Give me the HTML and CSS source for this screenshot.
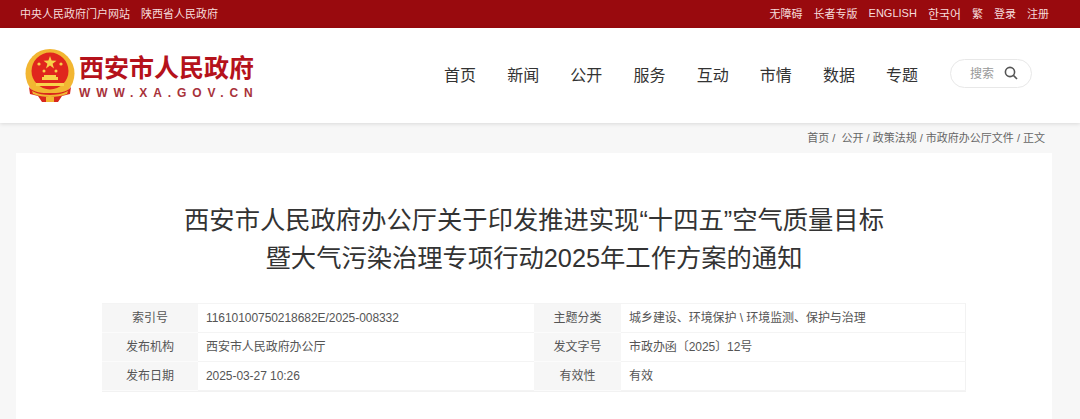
FILE: index.html
```html
<!DOCTYPE html>
<html lang="zh-CN">
<head>
<meta charset="utf-8">
<title>西安市人民政府</title>
<link rel="stylesheet" href="styles.css">
</head>
<body>
<div class="topbar">
  <div class="top-left"><span>中央人民政府门户网站</span><span>陕西省人民政府</span></div>
  <div class="top-right"><span>无障碍</span><span>长者专版</span><span>ENGLISH</span><span class="ko">한국어</span><span>繁</span><span>登录</span><span>注册</span></div>
</div>
<header class="header">
  <div class="logo">
    <svg class="emblem" width="50" height="53" viewBox="0 0 50 53">
      <circle cx="25" cy="24.5" r="24.5" fill="#f2b632"/>
      <circle cx="25" cy="22" r="18.5" fill="#e0261d"/>
      <path d="M25 7l1.6 4.6 4.9.1-3.9 3 1.4 4.7-4-2.8-4 2.8 1.4-4.7-3.9-3 4.9-.1z" fill="#f8d24a"/>
      <circle cx="14" cy="15" r="1.6" fill="#f8d24a"/><circle cx="36" cy="15" r="1.6" fill="#f8d24a"/>
      <circle cx="19" cy="22" r="1.5" fill="#f8d24a"/><circle cx="31" cy="22" r="1.5" fill="#f8d24a"/>
      <path d="M17 31h16v-3h-2v-2H19v2h-2zM11 34h28v3H11z" fill="#f8d24a"/>
      <path d="M4 38c5 6 13 6 21 6s16 0 21-6l-1 7-8 2-4 6H17l-4-6-8-2z" fill="#d8261d"/>
      <path d="M7 42c6 3 12 4 18 4s12-1 18-4l-1 3c-5 2-11 3-17 3S13 47 8 45zM21 46h8v7h-8z" fill="#f2b632"/>
    </svg>
    <div class="logo-text">
      <div class="logo-name">西安市人民政府</div>
      <div class="logo-url">WWW.XA.GOV.CN</div>
    </div>
  </div>
  <nav class="nav"><a>首页</a><a>新闻</a><a>公开</a><a>服务</a><a>互动</a><a>市情</a><a>数据</a><a>专题</a></nav>
  <div class="search">
    <span>搜索</span>
    <svg width="14" height="14" viewBox="0 0 14 14"><circle cx="6" cy="6" r="4.6" fill="none" stroke="#555" stroke-width="1.6"/><path d="M9.4 9.4L13 13" stroke="#555" stroke-width="1.6"/></svg>
  </div>
</header>
<main class="page">
  <div class="crumbs">首页 /&nbsp; 公开 / 政策法规 / 市政府办公厅文件 / 正文</div>
  <article class="card">
    <h1 class="title">西安市人民政府办公厅关于印发推进实现“十四五”空气质量目标<br>暨大气污染治理专项行动2025年工作方案的通知</h1>
    <div class="meta">
      <div class="lbl">索引号</div><div class="val">11610100750218682E/2025-008332</div>
      <div class="lbl">主题分类</div><div class="val">城乡建设、环境保护 \ 环境监测、保护与治理</div>
      <div class="lbl">发布机构</div><div class="val">西安市人民政府办公厅</div>
      <div class="lbl">发文字号</div><div class="val">市政办函〔2025〕12号</div>
      <div class="lbl">发布日期</div><div class="val">2025-03-27 10:26</div>
      <div class="lbl">有效性</div><div class="val">有效</div>
    </div>
  </article>
</main>
</body>
</html>
```
FILE: styles.css
```css
* { box-sizing: border-box; }
html, body { margin: 0; height: 100%; overflow: hidden; }
body {
  background: #f7f7f7;
  font-family: "Liberation Sans", "Noto Sans CJK SC", sans-serif;
  color: #333;
}
.topbar {
  height: 28px;
  background: #990a0e;
  color: #f6dcdc;
  font-size: 11px;
  display: flex;
  justify-content: space-between;
  align-items: center;
  padding: 0 31px 2px 20px;
}
.top-left { display: flex; gap: 11px; }
.top-right { display: flex; gap: 11px; align-items: center; }
.ko { font-size: 12px; }
.header {
  height: 95px;
  background: #fff;
  box-shadow: 0 1px 4px rgba(0,0,0,.12);
  display: flex;
  align-items: center;
  padding: 0 0 0 25px;
  position: relative;
}
.logo { display: flex; flex: none; align-items: center; gap: 4px; width: 419px; }
.emblem { flex: none; }
.logo-text { padding-top: 2px; }
.logo-name {
  font-size: 25px;
  line-height: 32px;
  font-weight: 700;
  color: #b5121b;
}
.logo-url {
  font-size: 12px;
  line-height: 16px;
  margin-top: 1px;
  font-weight: 700;
  letter-spacing: 5.9px;
  color: #a8323a;
  white-space: nowrap;
}
.nav { display: flex; flex: none; gap: 31.15px; margin-bottom: 3px; font-size: 16px; color: #333; white-space: nowrap; }
.search {
  flex: none;
  margin: 0 0 5px 32px;
  width: 82px;
  height: 29px;
  border: 1px solid #e8e8e8;
  border-radius: 15px;
  display: flex;
  align-items: center;
  gap: 10px;
  padding: 0 0 1px 19px;
  font-size: 12px;
  color: #999;
}
.page { padding: 0 28px 0 16px; }
.crumbs {
  height: 30px;
  display: flex;
  align-items: center;
  justify-content: flex-end;
  font-size: 11px;
  color: #666;
  white-space: pre;
  padding: 0 7px 2px 0;
}
.card {
  background: #fff;
  padding: 48px 86px 0;
  height: 266px;
}
.title {
  margin: 0 0 26px;
  font-size: 25.3px;
  line-height: 38px;
  font-weight: 400;
  text-align: center;
  color: #333;
}
.meta {
  display: grid;
  grid-template-columns: 96px 336px 87px 345px;
  grid-auto-rows: 29px;
  border-right: 1px solid #f2f2f2;
  border-top: 1px solid #f4f4f4;
  border-bottom: 1px solid #f2f2f2;
  font-size: 12px;
  line-height: 28px;
}
.lbl {
  background: #f6f6f6;
  text-align: center;
  color: #555;
  border-bottom: 1px solid #fbfbfb;
}
.val {
  padding-left: 8px;
  color: #555;
  letter-spacing: -0.06px;
  border-bottom: 1px solid #f4f4f4;
}
```
